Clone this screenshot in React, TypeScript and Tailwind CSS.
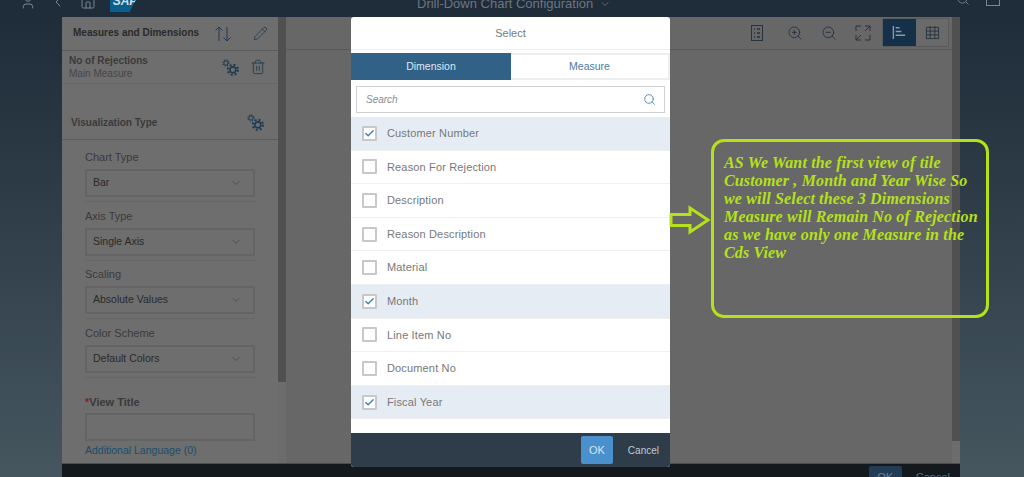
import { ChevronDown, ChevronLeft, Pencil, Search, Trash2, ZoomIn, ZoomOut, Home, User, Check } from "lucide-react";

const rows = [
  { label: "Customer Number", checked: true },
  { label: "Reason For Rejection", checked: false },
  { label: "Description", checked: false },
  { label: "Reason Description", checked: false },
  { label: "Material", checked: false },
  { label: "Month", checked: true },
  { label: "Line Item No", checked: false },
  { label: "Document No", checked: false },
  { label: "Fiscal Year", checked: true },
];

const Gears = () => (
  <svg viewBox="0 0 18 18" className="block w-[17px] h-[17px] text-[#1d3a52]" fill="none" stroke="currentColor">
    <circle cx="4.2" cy="4.2" r="2.2" strokeWidth="1" />
    <circle cx="4.2" cy="4.2" r="3.3" strokeWidth="1.2" strokeDasharray="1.3 1.3" />
    <circle cx="11.5" cy="11.5" r="3.2" strokeWidth="1.7" />
    <circle cx="11.5" cy="11.5" r="5.4" strokeWidth="2" strokeDasharray="2.1 2.15" />
  </svg>
);

const SelectField = ({ label, value }: { label: string; value: string }) => (
  <div className="mb-[4.5px]">
    <div className="h-[21px] text-[11px] leading-[19px] text-[#3a3a3a]">{label}</div>
    <div className="h-[28px] w-[170px] border-2 border-[#646464] flex items-center justify-between pl-[6px] pr-[11px] text-[10.5px] text-[#2a2a2a]">
      {value}
      <ChevronDown size={12} strokeWidth={1.5} className="text-[#2f4a60]" />
    </div>
    <div className="mt-[4px] w-[170px] border-b border-[#666666]" />
  </div>
);

const App = () => {
  return (
    <div
      className="relative w-[1024px] h-[477px] overflow-hidden flex flex-col bg-gradient-to-b from-[#1e2b38] to-[#46565f]"
      style={{ fontFamily: '"Liberation Sans", Arial, sans-serif' }}
    >
      {/* shell bar, cut off at the top */}
      <header className="h-[17px] shrink-0 bg-[#1f2c39] overflow-hidden flex items-start text-[#7c868d]">
        <div className="flex items-center -mt-[9px] pl-[20px] gap-[14px]">
          <User size={16} strokeWidth={1.5} />
          <ChevronLeft size={16} strokeWidth={1.5} />
          <Home size={16} strokeWidth={1.5} />
          <div className="w-[30px] h-[20px] mt-[1px] bg-[#0a5f8c] text-[#d0dbe2] text-[12px] font-bold italic leading-[18px] text-center [clip-path:polygon(0_0,100%_0,65%_100%,0_100%)]">
            SAP
          </div>
        </div>
        <div className="ml-[277px] -mt-[6px] flex items-center gap-[6px] text-[13px] text-[#6c7780] whitespace-nowrap">
          Drill-Down Chart Configuration
          <ChevronDown size={12} strokeWidth={1.5} />
        </div>
        <div className="ml-auto mr-[24px] -mt-[8px] flex items-center gap-[16px]">
          <Search size={14} strokeWidth={1.5} />
          <div className="w-[14px] h-[14px] border border-[#7c868d]" />
        </div>
      </header>

      {/* configuration panel */}
      <main className="ml-[62px] w-[898px] h-[446px] shrink-0 flex bg-[#6b6b6b]">
        <aside className="w-[216px] shrink-0 bg-[#6e6e6e] text-[#2b2b2b]">
          <div className="h-[34px] border-b border-[#5b5b5b] flex items-center pl-[11px] pr-[10px]">
            <span className="text-[10px] font-bold text-[#2a2a2a] -mt-[2px]">Measures and Dimensions</span>
            <svg viewBox="0 0 18 18" className="ml-[15px] mt-[1px] w-[18px] h-[18px] text-[#1d3a52]" fill="none" stroke="currentColor" strokeWidth="1">
              <path d="M5 16V2M1.5 5.5 5 2l3.5 3.5M13 2v14M9.5 12.5 13 16l3.5-3.5" />
            </svg>
            <Pencil size={15} strokeWidth={1.3} className="ml-auto text-[#1d3a52]" />
          </div>
          <div className="h-[33px] border-b border-[#666666] flex items-center pl-[7px] pr-[12px]">
            <div className="text-[10px] leading-[13px]">
              <div className="font-bold text-[#3a3a3a]">No of Rejections</div>
              <div className="text-[#464646]">Main Measure</div>
            </div>
            <span className="ml-auto"><Gears /></span>
            <Trash2 size={16} strokeWidth={1.3} className="ml-[11px] text-[#1d3a52]" />
          </div>
          <div className="h-[56px] border-b border-[#5e5e5e] flex items-end justify-between pl-[9px] pr-[14px] pb-[8px]">
            <span className="text-[10px] font-bold text-[#3a3a3a] mb-[1px]">Visualization Type</span>
            <Gears />
          </div>
          <div className="pl-[23px] pt-[8px]">
            <SelectField label="Chart Type" value="Bar" />
            <SelectField label="Axis Type" value="Single Axis" />
            <SelectField label="Scaling" value="Absolute Values" />
            <SelectField label="Color Scheme" value="Default Colors" />
            <div className="mt-[15px] h-[20px] text-[11px] leading-[19px] font-semibold text-[#3a3a3a]">
              <span className="text-[#8a2020]">*</span>View Title
            </div>
            <div className="h-[28px] w-[170px] border-2 border-[#646464]" />
            <div className="mt-[2px] text-[10.5px] text-[#1b4d6c]">Additional Language (0)</div>
          </div>
        </aside>

        <div className="w-[8px] shrink-0 bg-[#6c6c6c]">
          <div className="h-[365px] bg-[#505050]" />
        </div>

        <section className="flex-1 flex bg-[#676767] min-w-0">
          <div className="flex-1">
            <div className="h-[34px] border-b border-[#585858] flex items-center justify-end pr-[3px] -mt-px">
              <svg viewBox="0 0 12 16" className="w-[12px] h-[16px] mr-[24px] text-[#26333f]" fill="none" stroke="currentColor" strokeWidth="1">
                <rect x="0.5" y="0.5" width="11" height="15" />
                <path d="M3 4h1M3 8h1M3 12h1M6 4h3M6 8h3M6 12h3" strokeWidth="1.5" />
              </svg>
              <ZoomIn size={16} strokeWidth={1.4} className="mr-[18px] text-[#26333f]" />
              <ZoomOut size={16} strokeWidth={1.4} className="mr-[18px] text-[#26333f]" />
              <svg viewBox="0 0 16 16" className="w-[16px] h-[16px] mr-[11px] text-[#26333f]" fill="none" stroke="currentColor" strokeWidth="1">
                <path d="M1 6V1h5M10 1h5v5M15 10v5h-5M6 15H1v-5M1 15l5-5M15 1l-5 5" />
              </svg>
              <div className="w-[67px] h-[29px] flex rounded-[2px] border border-[#5a5a5a] bg-[#6a6a6a]">
                <div className="w-[33px] bg-[#15304a] flex items-center justify-center">
                  <svg viewBox="0 0 16 16" className="w-[15px] h-[15px] text-[#8d9aa5]" fill="none" stroke="currentColor" strokeWidth="1.5">
                    <path d="M1.5 1v14M4 3h4M4 7h6M4 11h10" />
                  </svg>
                </div>
                <div className="flex-1 flex items-center justify-center">
                  <svg viewBox="0 0 16 16" className="w-[15px] h-[15px] text-[#26333f]" fill="none" stroke="currentColor" strokeWidth="1">
                    <path d="M1.5 2.5h13v12h-13zM1.5 6.5h13M1.5 10.5h13M5.5 1v13.5M10.5 1v13.5" />
                  </svg>
                </div>
              </div>
            </div>
          </div>
          <div className="w-[8px] shrink-0 bg-[#6c6c6c]">
            <div className="h-[424px] bg-[#505050]" />
          </div>
        </section>
      </main>

      {/* footer */}
      <footer className="ml-[62px] w-[898px] flex-1 bg-[#14191e] border-t border-[#4c4c4c] flex items-start justify-end pr-[10px] pt-[2px] overflow-hidden">
        <div className="w-[33px] h-[24px] rounded-[2px] bg-[#223c55] text-[#6d8296] text-[11px] text-center leading-[22px]">OK</div>
        <div className="ml-[14px] text-[11px] leading-[22px] text-[#5f6b75]">Cancel</div>
      </footer>

      {/* select dialog */}
      <div className="absolute left-[351px] top-[17px] w-[319px] h-[450px] rounded-[3px] bg-white flex flex-col overflow-hidden">
        <div className="h-[33px] flex items-center justify-center text-[11px] text-[#7b7b7b] border-b border-[#efefef]">
          Select
        </div>
        <div className="mt-[3px] h-[27px] flex text-[10.5px]">
          <div className="w-[160px] bg-[#326187] text-[#dfe8ef] flex items-center justify-center">Dimension</div>
          <div className="flex-1 border-2 border-l-0 border-[#eeeeee] text-[#4b7ba3] flex items-center justify-center">Measure</div>
        </div>
        <div className="mx-[5px] mt-[6px] h-[27px] border border-[#cdd1d4] flex items-center justify-between pl-[9px] pr-[8px]">
          <span className="text-[10px] italic text-[#8b8b8b]">Search</span>
          <Search size={13} strokeWidth={1.6} className="text-[#4a80ad]" />
        </div>
        <ul className="mt-[4px] flex-1">
          {rows.map((row) => (
            <li
              key={row.label}
              className={`h-[33.6px] flex items-center pl-[11px] border-b border-[#efefef] ${row.checked ? "bg-[#e6ecf4]" : "bg-white"}`}
            >
              <span className="w-[15px] h-[15px] shrink-0 bg-white border-2 border-[#c6c8ca] rounded-[1px] flex items-center justify-center">
                {row.checked && <Check size={11} strokeWidth={3} className="text-[#3f7fb8]" />}
              </span>
              <span className="ml-[10px] text-[11px] text-[#787878] tracking-[0.15px]">{row.label}</span>
            </li>
          ))}
        </ul>
        <div className="h-[34px] shrink-0 bg-[#2f3c4a] flex items-center justify-end pr-[11px]">
          <div className="w-[32px] h-[28px] rounded-[2px] bg-[#4a90cc] text-[#d6e4ef] text-[11px] flex items-center justify-center">OK</div>
          <div className="ml-[15px] text-[10px] text-[#c2cbd2]">Cancel</div>
        </div>
      </div>

      {/* annotation */}
      <svg viewBox="0 0 42 30" className="absolute left-[669px] top-[205px] w-[42px] h-[30px]" fill="none" stroke="#b4e11a" strokeWidth="3">
        <path d="M2 9.5h19V3l18 12-18 12v-6.5H2z" />
      </svg>
      <div
        className="absolute left-[711px] top-[139px] w-[278px] h-[179px] rounded-[13px] border-[3px] border-[#b4e11a] pl-[10px] pt-[12px] text-[#b4e11a] text-[16px] leading-[18px] font-bold italic whitespace-nowrap tracking-[0.15px]"
        style={{ fontFamily: '"Liberation Serif", serif' }}
      >
        AS We Want the first view of tile
        <br />
        Customer , Month and Year Wise So
        <br />
        we will Select these 3 Dimensions
        <br />
        Measure will Remain No of Rejection
        <br />
        as we have only one Measure in the
        <br />
        Cds View
      </div>
    </div>
  );
};

export default App;
